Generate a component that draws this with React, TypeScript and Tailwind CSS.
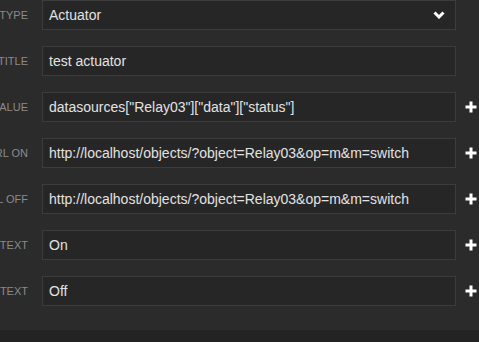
const rows = [
  { label: 'TYPE', value: 'Actuator', select: true },
  { label: 'TITLE', value: 'test actuator' },
  { label: 'VALUE', value: 'datasources["Relay03"]["data"]["status"]', plus: true },
  { label: 'URL ON', value: 'http://localhost/objects/?object=Relay03&op=m&m=switch', plus: true },
  { label: 'URL OFF', value: 'http://localhost/objects/?object=Relay03&op=m&m=switch', plus: true },
  { label: 'ON TEXT', value: 'On', plus: true },
  { label: 'OFF TEXT', value: 'Off', plus: true },
];

function Plus() {
  return (
    <svg width="12" height="12" viewBox="0 0 12 12" className="shrink-0">
      <path d="M6 0.5v11M0.5 6h11" stroke="#fff" strokeWidth="3" />
    </svg>
  );
}

function Chevron() {
  return (
    <svg width="12" height="8" viewBox="0 0 12 8">
      <path d="M1.5 1.5l4.5 4.5 4.5-4.5" stroke="#fff" strokeWidth="3" fill="none" />
    </svg>
  );
}

export default function App() {
  return (
    <div className="w-[479px] h-[342px] overflow-hidden bg-[#2b2b2b] font-['Liberation_Sans',Arial,sans-serif]">
      <div className="flex flex-col gap-4 pb-6">
        {rows.map(r => (
          <div key={r.label} className="flex items-center h-[30px]">
            <div className="flex justify-end w-[28px] shrink-0">
              <span className="whitespace-nowrap text-[11px] text-[#8a8a8a]">{r.label}</span>
            </div>
            <div className="ml-[14px] w-[414px] h-[30px] shrink-0 flex items-center justify-between border border-[#3c3c3c] bg-[#262626] pl-[6px] pr-[10px]">
              <span className="whitespace-nowrap text-[14px] text-[#e2e2e2]">{r.value}</span>
              {r.select && <Chevron />}
            </div>
            {r.plus && (
              <div className="ml-[9px]">
                <Plus />
              </div>
            )}
          </div>
        ))}
      </div>
      <div className="h-[12px] bg-[#232323]" />
    </div>
  );
}
